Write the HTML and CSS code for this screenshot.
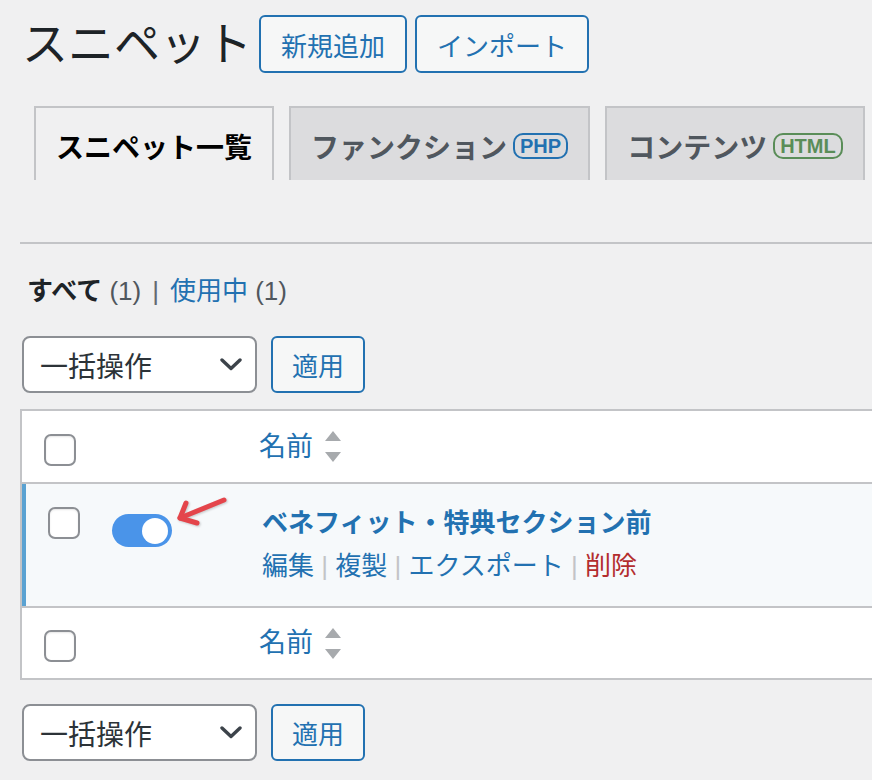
FILE: index.html
```html
<!DOCTYPE html>
<html lang="ja">
<head>
<meta charset="utf-8">
<title>スニペット</title>
<link rel="stylesheet" href="styles.css">
</head>
<body>
<div class="wrap">
  <div class="page-head">
    <h1 class="page-title">スニペット</h1>
    <a class="title-btn">新規追加</a>
    <a class="title-btn">インポート</a>
  </div>

  <nav class="tabs">
    <a class="tab active">スニペット一覧</a>
    <a class="tab">ファンクション<span class="badge badge-php">PHP</span></a>
    <a class="tab">コンテンツ<span class="badge badge-html">HTML</span></a>
  </nav>

  <div class="divider"></div>

  <ul class="views">
    <li><span class="current">すべて</span> <span class="count">(1)</span></li>
    <li class="sep">|</li>
    <li><a class="link">使用中</a> <span class="count">(1)</span></li>
  </ul>

  <div class="bulk">
    <div class="select">
      <span>一括操作</span>
      <svg class="chev" width="22" height="13" viewBox="0 0 22 13"><path d="M2 2 L11 10.5 L20 2" fill="none" stroke="#3c434a" stroke-width="3.4" stroke-linecap="round" stroke-linejoin="round"/></svg>
    </div>
    <a class="apply">適用</a>
  </div>

  <div class="table">
    <div class="trow thead">
      <span class="cb"></span>
      <span></span>
      <span class="colname">名前<svg class="sort" width="16" height="31" viewBox="0 0 16 31"><path d="M8 0 L16 10 L0 10 Z M0 21 L16 21 L8 31 Z" fill="#a7aaad"/></svg></span>
    </div>
    <div class="trow row-active">
      <span class="cb cb-row"></span>
      <span class="toggle"><span class="knob"></span></span>
      <div class="rowmain">
        <a class="snip-title">ベネフィット・特典セクション前</a>
        <div class="actions"><a class="link">編集</a> <span class="bar">|</span> <a class="link">複製</a> <span class="bar">|</span> <a class="link">エクスポート</a> <span class="bar">|</span> <a class="del">削除</a></div>
      </div>
      <svg class="pointer" width="56" height="32" viewBox="0 0 56 32"><g fill="none" stroke="#e4454b" stroke-width="5" stroke-linecap="round" stroke-linejoin="round"><path d="M49 5 L5 23"/><path d="M11 8 L5 23 L22 28"/></g></svg>
    </div>
    <div class="trow tfoot">
      <span class="cb"></span>
      <span></span>
      <span class="colname">名前<svg class="sort" width="16" height="31" viewBox="0 0 16 31"><path d="M8 0 L16 10 L0 10 Z M0 21 L16 21 L8 31 Z" fill="#a7aaad"/></svg></span>
    </div>
  </div>

  <div class="bulk bulk-bottom">
    <div class="select">
      <span>一括操作</span>
      <svg class="chev" width="22" height="13" viewBox="0 0 22 13"><path d="M2 2 L11 10.5 L20 2" fill="none" stroke="#3c434a" stroke-width="3.4" stroke-linecap="round" stroke-linejoin="round"/></svg>
    </div>
    <a class="apply">適用</a>
  </div>
</div>
</body>
</html>
```

FILE: styles.css
```css
html, body {
  margin: 0;
  padding: 0;
  background: #f0f0f1;
  overflow: hidden;
}

body {
  font-family: "Liberation Sans", "Noto Sans CJK JP", sans-serif;
  color: #3c434a;
}

.wrap {
  padding-left: 20px;
}

/* header */
.page-head {
  display: flex;
  align-items: center;
  height: 58px;
  padding-top: 15px;
  padding-left: 2px;
}

.page-title {
  margin: 0 7px 0 0;
  font-size: 46px;
  font-weight: 400;
  line-height: 58px;
  color: #1d2327;
  white-space: nowrap;
}

.title-btn {
  display: inline-flex;
  align-items: center;
  flex-shrink: 0;
  height: 58px;
  box-sizing: border-box;
  padding: 0 20px;
  margin-right: 8px;
  border: 2px solid #2271b1;
  border-radius: 6px;
  background: #f6f7f7;
  color: #2271b1;
  font-size: 26px;
  text-decoration: none;
}

/* tabs */
.tabs {
  display: flex;
  gap: 15px;
  margin-top: 33px;
  padding-left: 14px;
}

.tab {
  display: flex;
  align-items: center;
  flex-shrink: 0;
  white-space: nowrap;
  height: 74px;
  box-sizing: border-box;
  padding: 4px 20px 0;
  border: 2px solid #c3c4c7;
  border-bottom: none;
  background: #dcdcde;
  color: #50575e;
  font-size: 28px;
  font-weight: 700;
}

.tab.active {
  background: #f0f0f1;
  color: #000;
}

.badge {
  display: inline-flex;
  align-items: center;
  height: 26px;
  box-sizing: border-box;
  margin-left: 6px;
  padding: 0 5px;
  border: 2px solid currentColor;
  border-radius: 10px;
  font-family: "Liberation Sans", sans-serif;
  font-size: 20px;
  font-weight: 700;
}

.badge-php {
  color: #2271b1;
}

.badge-html {
  color: #5a8d58;
}

.divider {
  height: 2px;
  margin-top: 62px;
  background: #c3c4c7;
}

/* views */
.views {
  display: flex;
  align-items: center;
  gap: 11px;
  list-style: none;
  margin: 29px 0 0;
  padding: 0 0 0 7px;
  font-size: 26px;
  line-height: 36px;
}

.current {
  font-weight: 700;
  color: #1d2327;
}

.count {
  color: #50575e;
}

.sep {
  color: #646970;
}

.link {
  color: #2271b1;
}

/* bulk */
.bulk {
  display: flex;
  align-items: center;
  margin-top: 27px;
  padding-left: 2px;
}

.bulk-bottom {
  margin-top: 24px;
}

.select {
  display: flex;
  align-items: center;
  justify-content: space-between;
  width: 235px;
  height: 57px;
  box-sizing: border-box;
  padding: 0 13px 0 16px;
  border: 2px solid #8c8f94;
  border-radius: 8px;
  background: #fff;
  color: #2c3338;
  font-size: 28px;
}

.apply {
  display: flex;
  align-items: center;
  justify-content: center;
  width: 94px;
  height: 57px;
  box-sizing: border-box;
  margin-left: 14px;
  border: 2px solid #2271b1;
  border-radius: 6px;
  background: #f6f7f7;
  color: #2271b1;
  font-size: 26px;
}

/* table */
.table {
  margin-top: 16px;
  border: 2px solid #c3c4c7;
  border-right: none;
  background: #fff;
}

.trow {
  display: grid;
  grid-template-columns: 64px 151px 1fr;
  box-sizing: border-box;
  padding-left: 22px;
}

.thead {
  height: 73px;
  align-items: center;
  border-bottom: 2px solid #c3c4c7;
}

.tfoot {
  height: 72px;
  align-items: center;
  border-top: 2px solid #c3c4c7;
}

.cb {
  display: block;
  width: 32px;
  height: 32px;
  box-sizing: border-box;
  border: 2px solid #8c8f94;
  border-radius: 7px;
  background: #fff;
  box-shadow: inset 0 1px 2px rgba(0, 0, 0, 0.1);
}

.thead .cb {
  margin-top: 6px;
}

.tfoot .cb {
  margin-top: 6px;
}

.colname {
  display: flex;
  align-items: center;
  color: #2271b1;
  font-size: 27px;
  line-height: 36px;
}

.sort {
  margin-left: 12px;
}

.row-active {
  position: relative;
  height: 122px;
  padding-top: 21px;
  padding-left: 22px;
  grid-template-columns: 64px 150px 1fr;
  align-items: start;
  border-left: 4px solid #5aa2d2;
  background: #f6f9fb;
}

.cb-row {
  margin-top: 2px;
}

.toggle {
  display: flex;
  justify-content: flex-end;
  align-items: center;
  width: 60px;
  height: 33px;
  box-sizing: border-box;
  margin-top: 9px;
  padding: 0 4px;
  border-radius: 17px;
  background: #4a94e9;
}

.knob {
  width: 26px;
  height: 26px;
  border-radius: 50%;
  background: #fff;
}

.rowmain {
  line-height: 36px;
}

.snip-title {
  display: block;
  color: #2271b1;
  font-size: 26px;
  font-weight: 700;
}

.actions {
  margin-top: 7px;
  font-size: 26px;
}

.bar {
  color: #c3c4c7;
}

.del {
  color: #b32d2e;
}

.pointer {
  position: absolute;
  left: 149px;
  top: 11px;
  filter: drop-shadow(1px 1px 1px rgba(0, 0, 0, 0.2));
}
```
